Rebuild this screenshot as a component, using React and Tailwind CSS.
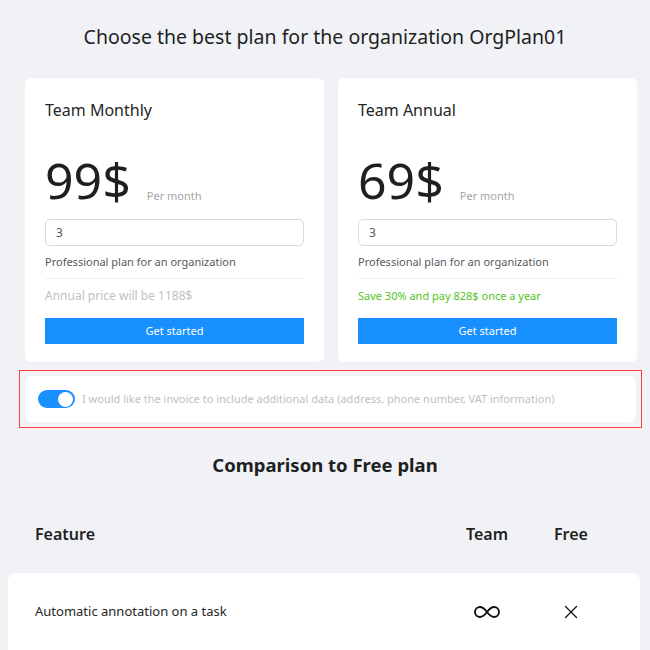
import { X } from 'lucide-react'

function PlanCard({ title, price, note, noteClass }) {
  return (
    <div className="bg-white rounded-[6px] px-5 pt-[20px] pb-[18px] flex flex-col">
      <h3 className="text-[16px] text-[#262626] leading-[24px]">{title}</h3>
      <div className="flex items-end mt-[29px] h-[58px]">
        <span className="text-[50px] leading-[58px] text-[#1f1f1f]">{price}</span>
        <span className="text-[11px] text-[#a6a6a6] ml-[16px] mb-[5px]">Per month</span>
      </div>
      <div className="mt-[10px] h-[27px] border border-[#d9d9d9] rounded-[5px] px-[10px] flex items-center text-[12px] text-[#595959]">
        3
      </div>
      <p className="mt-[7px] text-[11px] text-[#595959] leading-[18px]">Professional plan for an organization</p>
      <div className="mt-[7px] border-t border-[#f0f0f0]" />
      <p className={`mt-[8px] leading-[18px] ${noteClass}`}>{note}</p>
      <button className="mt-[13px] h-[26px] bg-[#1890ff] text-white text-[11px] w-full">Get started</button>
    </div>
  )
}

function Infinity() {
  return (
    <svg width="26" height="14" viewBox="0 0 26 14" fill="none" stroke="#111" strokeWidth="1.9">
      <path d="M13 7c-2.5-3.2-4.3-5-7-5a5 5 0 0 0 0 10c2.7 0 4.5-1.8 7-5s4.3-5 7-5a5 5 0 0 1 0 10c-2.7 0-4.5-1.8-7-5z" />
    </svg>
  )
}

export default function App() {
  return (
    <div className="w-[650px] h-[650px] overflow-hidden bg-[#f0f2f5]" style={{ fontFamily: '"Noto Sans", sans-serif' }}>
      <h1 className="text-center text-[19.5px] text-[#1f1f1f] pt-[22px] leading-[30px]">
        Choose the best plan for the organization OrgPlan01
      </h1>
      <div className="grid grid-cols-2 gap-[14px] ml-[25px] w-[612px] mt-[26px]">
        <PlanCard
          title="Team Monthly"
          price="99$"
          note="Annual price will be 1188$"
          noteClass="text-[12px] text-[#bfbfbf]"
        />
        <PlanCard
          title="Team Annual"
          price="69$"
          note="Save 30% and pay 828$ once a year"
          noteClass="text-[11px] text-[#52c41a]"
        />
      </div>
      <div className="mx-[19px] mt-[8px] w-[623px] border border-[#ff3b3b] px-[5px] py-[5px]">
        <div className="bg-white rounded-[6px] h-[46px] flex items-center px-[13px]">
          <div className="w-[37px] h-[18px] rounded-full bg-[#1890ff] flex items-center justify-end pr-[2px] shrink-0">
            <div className="w-[15px] h-[15px] rounded-full bg-white" />
          </div>
          <span className="ml-[7px] text-[11px] text-[#bfbfbf] whitespace-nowrap">
            I would like the invoice to include additional data (address, phone number, VAT information)
          </span>
        </div>
      </div>
      <h2 className="text-center text-[18.5px] font-bold text-[#1f1f1f] mt-[23px] leading-[28px]">
        Comparison to Free plan
      </h2>
      <div className="mx-[8px] w-[632px] grid grid-cols-[1fr_84px_84px] px-[27px] mt-[43px] text-[16px] font-semibold text-[#1f1f1f] leading-[24px]">
        <span>Feature</span>
        <span className="text-center">Team</span>
        <span className="text-center">Free</span>
      </div>
      <div className="mx-[8px] w-[632px] mt-[27px] bg-white rounded-[8px] h-[90px] grid grid-cols-[1fr_84px_84px] px-[27px] items-center">
        <span className="text-[13px] text-[#262626] -mt-[12px]">Automatic annotation on a task</span>
        <span className="flex justify-center -mt-[12px]"><Infinity /></span>
        <span className="flex justify-center -mt-[12px]"><X size={22} strokeWidth={1.4} color="#111" /></span>
      </div>
    </div>
  )
}
